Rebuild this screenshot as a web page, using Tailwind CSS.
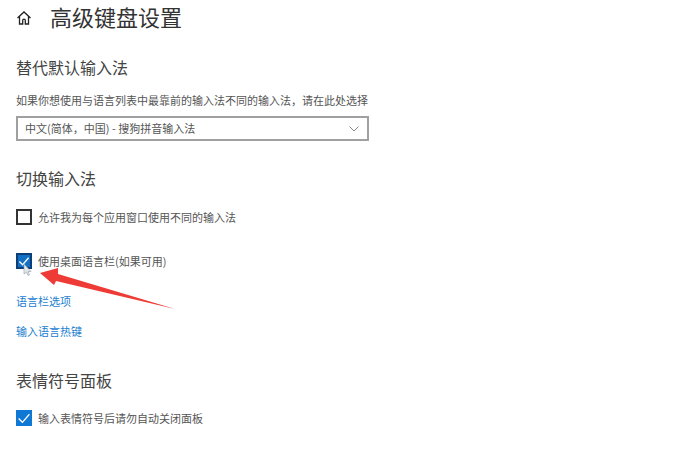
<!DOCTYPE html>
<html lang="zh-CN">
<head>
<meta charset="utf-8">
<script src="https://cdn.jsdelivr.net/npm/@tailwindcss/browser@4"></script>
</head>
<body class="bg-white">
<div class="relative w-[691px] h-[451px] overflow-hidden bg-white text-[#2b2b2b] font-['Noto_Sans_CJK_SC','Noto_Sans',sans-serif] pl-4">
  <header class="flex items-center h-[38px] -mt-[3px]">
    <svg class="w-[16px] h-[16px] mt-[4px]" viewBox="0 0 16 16" fill="none" stroke="#222" stroke-width="1.300"><path d="M1.500 8 8 2l6.500 6M3.500 6.500V14h3.200V10.500a1.300 1.300 0 0 1 2.600 0V14h3.200V6.500"/></svg>
    <h1 class="ml-[18px] text-[22px] leading-[38px] text-[#333]">高级键盘设置</h1>
  </header>
  <h2 class="mt-[20px] text-[16px] leading-[24px] text-[#444]">替代默认输入法</h2>
  <p class="mt-[13px] text-[11px] leading-[16px] text-[#555]">如果你想使用与语言列表中最靠前的输入法不同的输入法，请在此处选择</p>
  <div class="mt-[8px] w-[353px] h-[25px] border-2 border-[#a0a0a0] flex items-center justify-between pl-[7px] pr-[8px] text-[11px] text-[#555]">
    <span>中文(简体，中国) - 搜狗拼音输入法</span>
    <svg class="w-[10px] h-[6px]" viewBox="0 0 10 6" fill="none" stroke="#888" stroke-width="1"><path d="M.5.5 5 5 9.500.5"/></svg>
  </div>
  <h2 class="mt-[25px] text-[16px] leading-[24px] text-[#444]">切换输入法</h2>
  <label class="mt-[19px] flex items-center gap-[6px] text-[11px] leading-[16px] text-[#555]">
    <span class="w-[16px] h-[16px] border-2 border-[#333] bg-white"></span>
    <span>允许我为每个应用窗口使用不同的输入法</span>
  </label>
  <label class="mt-[28px] flex items-center gap-[6px] text-[11px] leading-[16px] text-[#555]">
    <span class="w-[16px] h-[16px] bg-[#1270c4] border-2 border-[#0c3f78] flex items-center justify-center">
      <svg class="w-[12px] h-[12px] shrink-0" viewBox="0 0 13 13" fill="none" stroke="#fff" stroke-width="1.400"><path d="M1.500 7 5 10.500 11.500 3"/></svg>
    </span>
    <span>使用桌面语言栏(如果可用)</span>
  </label>
  <a class="block mt-[24px] text-[11px] leading-[16px] text-[#1a80d0]">语言栏选项</a>
  <a class="block mt-[14px] text-[11px] leading-[16px] text-[#1a80d0]">输入语言热键</a>
  <h2 class="mt-[29px] text-[16px] leading-[24px] text-[#444]">表情符号面板</h2>
  <label class="mt-[18px] flex items-center gap-[6px] text-[11px] leading-[16px] text-[#555]">
    <span class="w-[16px] h-[16px] bg-[#0f78d4] flex items-center justify-center">
      <svg class="w-[14px] h-[14px]" viewBox="0 0 13 13" fill="none" stroke="#fff" stroke-width="1.200"><path d="M1.500 7 5 10.500 11.500 3"/></svg>
    </span>
    <span>输入表情符号后请勿自动关闭面板</span>
  </label>
  <svg class="absolute left-0 top-0 pointer-events-none" width="691" height="451" viewBox="0 0 691 451">
    <path d="M40 273 58 268 58 274 175 309 56 281 54 285Z" fill="#ef3b36"/>
    <path d="M24 264v10l2.500-2 1.500 3.500 1.500-.7-1.500-3.300H31Z" fill="#e8e8e8" stroke="#8a9aa8" stroke-width=".6"/>
  </svg>
</div>
</body>
</html>
